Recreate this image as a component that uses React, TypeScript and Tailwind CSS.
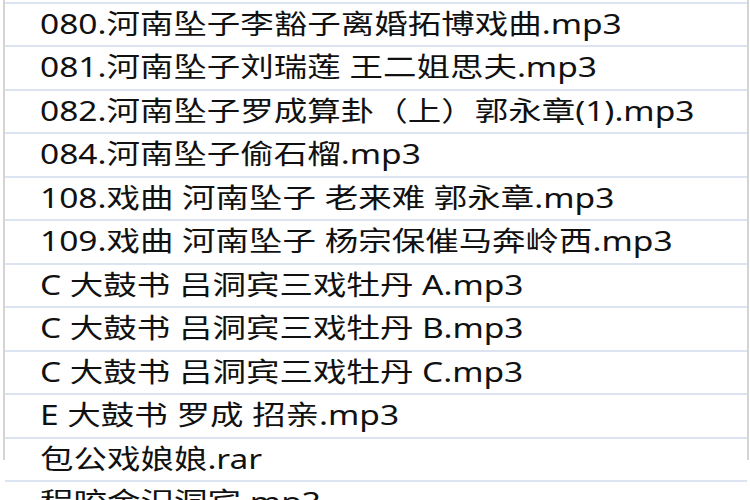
import React from "react";

const rows: string[] = [
  "079.河南坠子 王二姐思夫 下.mp3",
  "080.河南坠子李豁子离婚拓博戏曲.mp3",
  "081.河南坠子刘瑞莲 王二姐思夫.mp3",
  "082.河南坠子罗成算卦（上）郭永章(1).mp3",
  "084.河南坠子偷石榴.mp3",
  "108.戏曲 河南坠子 老来难 郭永章.mp3",
  "109.戏曲 河南坠子 杨宗保催马奔岭西.mp3",
  "C 大鼓书 吕洞宾三戏牡丹 A.mp3",
  "C 大鼓书 吕洞宾三戏牡丹 B.mp3",
  "C 大鼓书 吕洞宾三戏牡丹 C.mp3",
  "E 大鼓书 罗成 招亲.mp3",
  "包公戏娘娘.rar",
  "程咬金汜洞宾.mp3",
];

export default function App() {
  return (
    <div className="w-[750px] h-[500px] overflow-hidden bg-white">
      <div className="ml-[3px] w-[746px] h-full border-l-2 border-r-2 border-[#d4d4d4]">
        <div className="-mt-[40px] flex flex-col">
          {rows.map((text, i) => (
            <div
              key={i}
              className={`${i % 2 === 0 ? "h-[44px]" : "h-[43px]"} border-b-2 border-[#dce3f1] flex items-start pl-[35px] pt-[2px]`}
            >
              <span
                className="inline-block whitespace-nowrap origin-left [transform:scaleX(1.24)] text-[27px] leading-[36px] text-[#111]"
                style={{ fontFamily: '"Noto Sans", "Noto Sans CJK SC", sans-serif' }}
              >
                {text}
              </span>
            </div>
          ))}
        </div>
      </div>
    </div>
  );
}
